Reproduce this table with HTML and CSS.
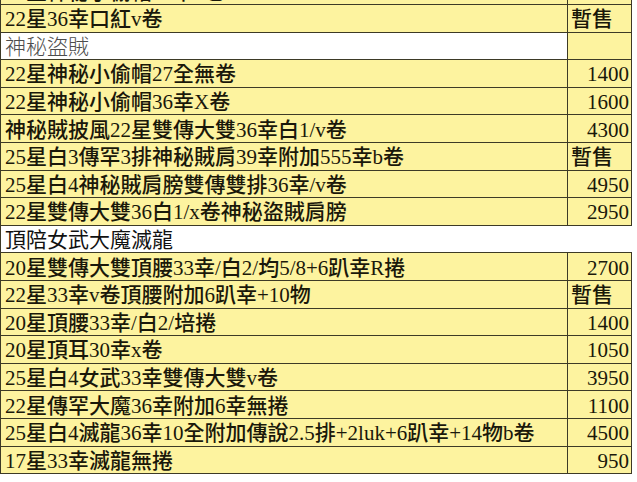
FILE: index.html
```html
<!DOCTYPE html>
<html lang="zh-Hant">
<head>
<meta charset="utf-8">
<title>價目表</title>
<link rel="stylesheet" href="styles.css">
</head>
<body>
<table class="price">
  <colgroup><col class="c-name"><col class="c-price"></colgroup>
  <tbody>
    <tr class="item"><td class="name">22星神秘小偷帽36幸v卷</td><td class="val"></td></tr>
    <tr class="item"><td class="name">22星36幸口紅v卷</td><td class="val note">暫售</td></tr>
    <tr class="sec"><td class="name sec-light">神秘盜賊</td><td class="val"></td></tr>
    <tr class="item"><td class="name">22星神秘小偷帽27全無卷</td><td class="val">1400</td></tr>
    <tr class="item"><td class="name">22星神秘小偷帽36幸X卷</td><td class="val">1600</td></tr>
    <tr class="item"><td class="name">神秘賊披風22星雙傳大雙36幸白1/v卷</td><td class="val">4300</td></tr>
    <tr class="item"><td class="name">25星白3傳罕3排神秘賊肩39幸附加555幸b卷</td><td class="val note">暫售</td></tr>
    <tr class="item"><td class="name">25星白4神秘賊肩膀雙傳雙排36幸/v卷</td><td class="val">4950</td></tr>
    <tr class="item"><td class="name">22星雙傳大雙36白1/x卷神秘盜賊肩膀</td><td class="val">2950</td></tr>
    <tr class="sec"><td class="name sec-full" colspan="2">頂陪女武大魔滅龍</td></tr>
    <tr class="item"><td class="name">20星雙傳大雙頂腰33幸/白2/均5/8+6趴幸R捲</td><td class="val">2700</td></tr>
    <tr class="item"><td class="name">22星33幸v卷頂腰附加6趴幸+10物</td><td class="val note">暫售</td></tr>
    <tr class="item"><td class="name">20星頂腰33幸/白2/培捲</td><td class="val">1400</td></tr>
    <tr class="item"><td class="name">20星頂耳30幸x卷</td><td class="val">1050</td></tr>
    <tr class="item"><td class="name">25星白4女武33幸雙傳大雙v卷</td><td class="val">3950</td></tr>
    <tr class="item"><td class="name">22星傳罕大魔36幸附加6幸無捲</td><td class="val">1100</td></tr>
    <tr class="item"><td class="name">25星白4滅龍36幸10全附加傳說2.5排+2luk+6趴幸+14物b卷</td><td class="val">4500</td></tr>
    <tr class="item"><td class="name">17星33幸滅龍無捲</td><td class="val">950</td></tr>
  </tbody>
</table>
</body>
</html>
```

FILE: styles.css
```css
html, body {
  margin: 0;
  padding: 0;
  background: #ffffff;
}

body {
  overflow: hidden;
  font-family: "Liberation Serif", "Noto Sans CJK TC", serif;
  color: #1a180a;
}

.price {
  border-collapse: collapse;
  table-layout: fixed;
  width: 631px;
  margin-top: -23.6px;
}

.c-name { width: 567px; }
.c-price { width: 64px; }

.price td {
  height: 24.6px;
  padding: 2px 4px 0;
  font-size: 21px;
  font-weight: 500;
  line-height: 24px;
  border: 1px solid #3d3a26;
  white-space: nowrap;
  overflow: hidden;
  vertical-align: middle;
}

.item td,
.sec .val {
  background: #fdf39f;
}

.name {
  text-align: left;
  padding-left: 4px;
}

.val {
  text-align: right;
}

.price .val {
  padding-right: 2px;
}

.price .val.note {
  text-align: left;
  padding-left: 3px;
}

.price .sec-light {
  background: #ffffff;
  color: #4d4d4d;
  font-weight: 300;
}

.price .sec-full {
  background: #ffffff;
  border-right-color: #ffffff;
  color: #111111;
  font-weight: 400;
}
```
